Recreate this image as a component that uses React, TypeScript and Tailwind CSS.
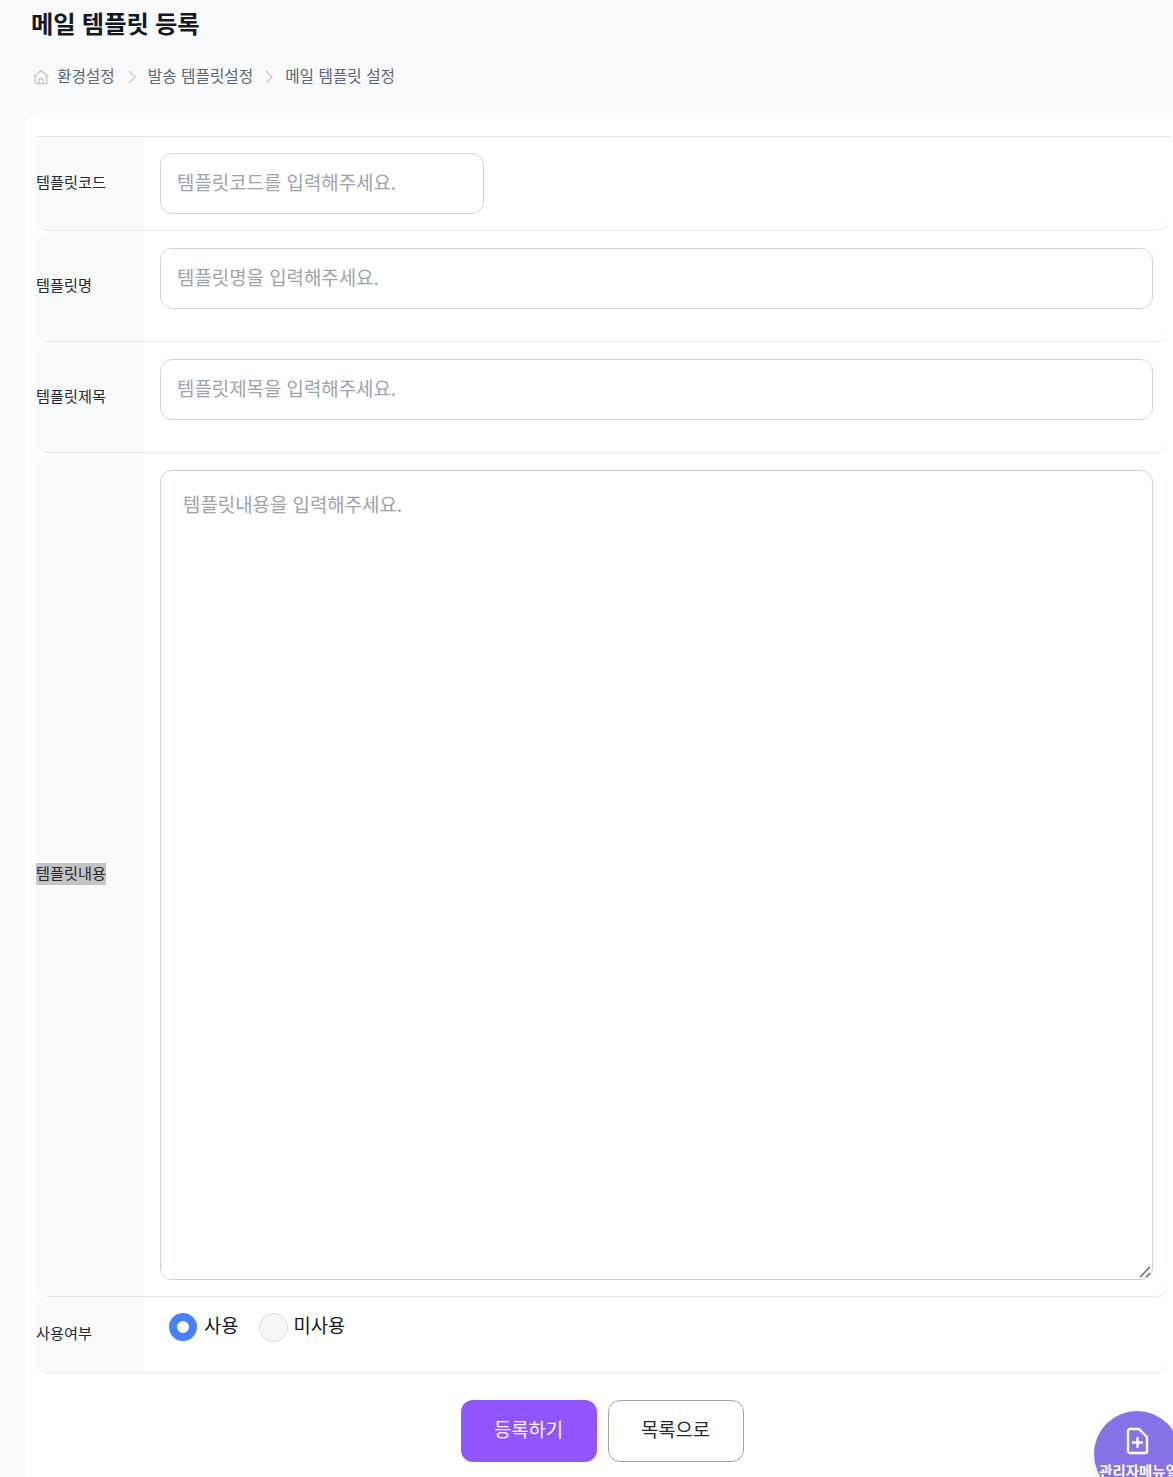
const font = '[font-family:Inter,"Noto_Sans_CJK_KR",sans-serif]'

function Row({ label, selected, className, children }: { label: string; selected?: boolean; className: string; children: React.ReactNode }) {
  return (
    <div className={`flex rounded-xl border-b border-[#e5e7eb] ${className}`}>
      <div className="flex w-[108px] shrink-0 items-center rounded-l-xl bg-[#f9fafb] pb-[2px] text-[15.2px] text-[#1f2937]">
        <span className={selected ? 'bg-[#c4c4c4] leading-[22px]' : 'leading-[22px]'}>{label}</span>
      </div>
      <div className="min-w-0 flex-1 pt-4 pr-[15px] pl-4">{children}</div>
    </div>
  )
}

function TextInput({ placeholder, className }: { placeholder: string; className: string }) {
  return (
    <input
      className={`h-[61px] rounded-xl border border-[#d1d5db] bg-white px-[16px] text-[18.9px] outline-none placeholder:text-[#9ca3af] ${className}`}
      placeholder={placeholder}
    />
  )
}

export default function App() {
  return (
    <div className={`relative h-[1477px] overflow-hidden bg-[#f9fafb] ${font}`}>
      {/* HEADER */}
      <div className="h-[113px] pl-[31px]">
        <h1 className="pt-[8px] text-[24.3px] leading-[32px] font-semibold text-[#111827]">메일 템플릿 등록</h1>
        <div className="mt-[25px] flex items-center text-[15.7px] leading-[24px] text-[#5b6676]">
          <svg className="mr-[8px] ml-[2px] h-[16px] w-[16px] text-[#c0c5cc]" viewBox="0 0 16 16" fill="none" stroke="currentColor" strokeWidth="1.3">
            <path d="M1 7.2 8 1.6l7 5.6" strokeLinecap="round" strokeLinejoin="round" />
            <path d="M2.3 6.4v6.8a1.5 1.5 0 0 0 1.5 1.5h8.4a1.5 1.5 0 0 0 1.5-1.5V6.4" />
            <path d="M5.8 14.7v-3a2.2 2.2 0 0 1 4.4 0v3" />
          </svg>
          <span>환경설정</span>
          <svg className="mr-[10px] ml-[11px] h-[14px] w-[12px] text-[#c5cad1]" viewBox="0 0 12 14" fill="none" stroke="currentColor" strokeWidth="1.2">
            <path d="m3 1 6 6-6 6" />
          </svg>
          <span>발송 템플릿설정</span>
          <svg className="mx-[10px] h-[14px] w-[12px] text-[#c5cad1]" viewBox="0 0 12 14" fill="none" stroke="currentColor" strokeWidth="1.2">
            <path d="m3 1 6 6-6 6" />
          </svg>
          <span>메일 템플릿 설정</span>
        </div>
      </div>

      {/* FORM CARD */}
      <div className="ml-[25px] h-[1364px] rounded-tl-xl bg-white pt-[23px] pl-[11px]">
        <div className="mr-[3px] border-t border-[#e5e7eb]" />
        <div className="mr-[5px]">
          <Row label="템플릿코드" className="h-[94px]">
            <TextInput placeholder="템플릿코드를 입력해주세요." className="w-[324px]" />
          </Row>
          <Row label="템플릿명" className="h-[111px] pt-px">
            <TextInput placeholder="템플릿명을 입력해주세요." className="w-full" />
          </Row>
          <Row label="템플릿제목" className="h-[111px] pt-px">
            <TextInput placeholder="템플릿제목을 입력해주세요." className="w-full" />
          </Row>
          <Row label="템플릿내용" selected className="h-[844px] pt-px">
            <div className="relative">
              <textarea
                className="block h-[810px] w-full resize-none rounded-xl border border-[#c5d3de] bg-white px-[22px] pt-[19px] pb-[18px] text-[18.9px] leading-[32px] outline-none placeholder:text-[#9ca3af]"
                placeholder="템플릿내용을 입력해주세요."
              />
              <svg className="absolute right-[2px] bottom-[2px] h-[12px] w-[12px] text-[#555555]" viewBox="0 0 12 12" fill="none" stroke="currentColor" strokeWidth="1.2">
                <path d="M1 11 11 1M7 11l4-4" />
              </svg>
            </div>
          </Row>
          <Row label="사용여부" className="h-[76px]">
            <div className="flex h-[28px] items-center pl-[9px] text-[18.8px] text-[#111827]">
              <span className="h-[28px] w-[28px] rounded-full border-[8px] border-[#4680ff] bg-white" />
              <span className="ml-[7px] pt-px">사용</span>
              <span className="ml-[20px] h-[29px] w-[29px] rounded-full border border-[#dcdcdc] bg-[#f6f6f6]" />
              <span className="ml-[6px] pt-px">미사용</span>
            </div>
          </Row>
        </div>

        <div className="mt-[27px] flex justify-center gap-[11px] pr-[5px] text-[18.8px]">
          <button className="h-[62px] w-[136px] rounded-xl bg-[#9155fd] text-white">등록하기</button>
          <button className="h-[62px] w-[136px] rounded-xl border border-[#9ca3af] bg-white text-[#1f2937]">목록으로</button>
        </div>
      </div>

      {/* MANUAL BUTTON */}
      <div className="absolute top-[1411px] left-[1094px] flex h-[86px] w-[86px] flex-col items-center rounded-full bg-[#8772e8] pt-[16px] text-white shadow-lg">
        <svg className="h-[28px] w-[24px] shrink-0" viewBox="0 0 24 28" fill="none" stroke="currentColor" strokeWidth="2.4" strokeLinejoin="round" strokeLinecap="round">
          <path d="M5 2h9l8 8v14a2 2 0 0 1-2 2H5a2 2 0 0 1-2-2V4a2 2 0 0 1 2-2Z" />
          <path d="M12.5 11v9M8 15.5h9" />
        </svg>
        <span className="mt-[7px] ml-[4px] text-[14.4px] leading-[20px] font-semibold whitespace-nowrap">관리자메뉴얼</span>
      </div>
    </div>
  )
}
